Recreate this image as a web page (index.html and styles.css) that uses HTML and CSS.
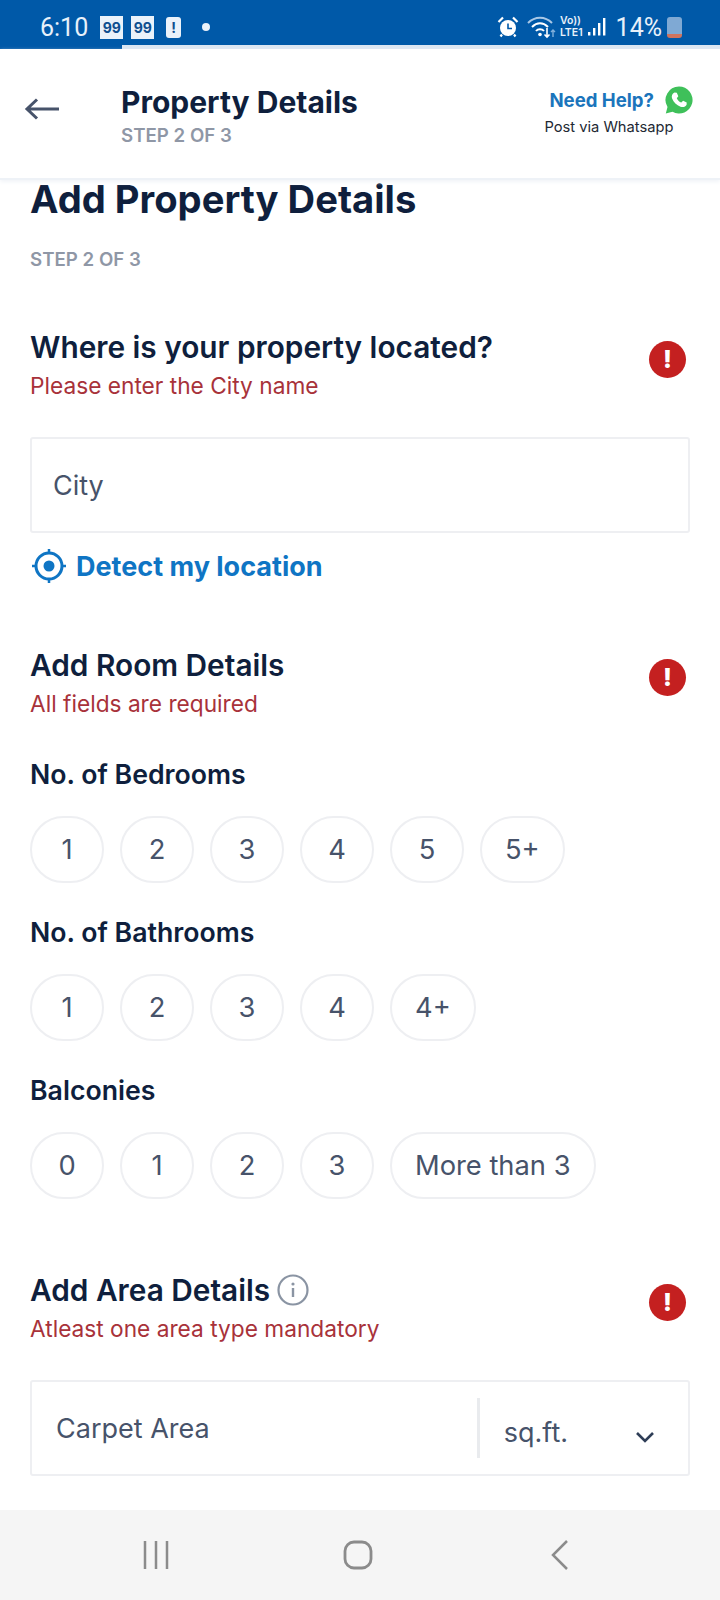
FILE: index.html
```html
<!DOCTYPE html>
<html lang="en">
<head>
  <meta charset="UTF-8">
  <meta name="viewport" content="width=device-width, initial-scale=1.0">
  <title>Property Details</title>
  <link rel="stylesheet" href="styles.css">
</head>
<body>
  <!-- Status Bar -->
  <div class="status-bar">
    <div class="status-left">
      <span class="clock">6:10</span>
      <span class="badge">99</span>
      <span class="badge">99</span>
      <span class="notice">!</span>
      <span class="dot"></span>
    </div>
    <div class="status-right">
      <svg class="alarm" width="22" height="22" viewBox="0 0 22 22">
        <circle cx="11" cy="12" r="8" fill="#fff"/>
        <path d="M11 7.5V12.5H15" fill="none" stroke="#0059a8" stroke-width="1.6"/>
        <path d="M1.500 6L6 1.500M16 1.500L20.500 6M5 18.500L3.500 20.500M17 18.500L18.500 20.500" stroke="#fff" stroke-width="2.200"/>
      </svg>
      <svg class="wifi" width="30" height="24" viewBox="0 0 30 24">
        <path d="M1 8C8 1 18 1 25 8" fill="none" stroke="#a9c8e6" stroke-width="2"/>
        <path d="M5 12C10 7 16 7 21 12" fill="none" stroke="#fff" stroke-width="2"/>
        <path d="M9 16C11 13.500 15 13.500 17 16" fill="none" stroke="#fff" stroke-width="2"/>
        <circle cx="13" cy="19.500" r="1.800" fill="#fff"/>
        <path d="M20 13V22M17.500 19.500L20 22L22.500 19.500" fill="none" stroke="#fff" stroke-width="1.600"/>
        <path d="M26 22V15M24 17L26 15L28 17" fill="none" stroke="#7fb0dc" stroke-width="1.400"/>
      </svg>
      <span class="volte"><span>Vo))</span><span>LTE1</span></span>
      <svg class="signal" width="20" height="20" viewBox="0 0 20 20">
        <rect x="1" y="15" width="2.400" height="3.500" fill="#fff"/>
        <rect x="6" y="11" width="2.400" height="7.500" fill="#fff"/>
        <rect x="11" y="6" width="2.400" height="12.500" fill="#fff"/>
        <rect x="16" y="1" width="2.400" height="17.500" fill="#fff"/>
      </svg>
      <span class="percent">14%</span>
      <span class="battery"></span>
    </div>
  </div>
  <div class="progress"><div class="progress-fill"></div></div>

  <!-- Header -->
  <header class="header">
    <svg class="back" width="36" height="24" viewBox="0 0 36 24">
      <path d="M35 12H3M13 2.500L3 12L13 21.500" fill="none" stroke="#47536a" stroke-width="3"/>
    </svg>
    <div class="header-title">
      <h2>Property Details</h2>
      <p>STEP 2 OF 3</p>
    </div>
    <div class="help">
      <div class="help-top">
        <span class="help-text">Need Help?</span>
        <svg width="28" height="28" viewBox="0 0 28 28">
          <path d="M14 0.500A13.500 13.500 0 1 1 7.500 25.800L0.800 27.500L2.500 21A13.500 13.500 0 0 1 14 0.500Z" fill="#3fc05a"/>
          <path d="M9.500 6.500L11.800 6.700L13.300 10.300L11.800 12.200C12.800 14.300 14.300 15.700 16.300 16.600L18.100 14.700L21.700 16.400L21.600 18.700C20.500 21 18 21.600 15.500 20.700C11.500 19.200 8.700 16.300 7.100 12.500C6.200 10 7.200 7.600 9.500 6.500Z" fill="#fff"/>
        </svg>
      </div>
      <div class="help-sub">Post via Whatsapp</div>
    </div>
  </header>

  <!-- Main Content -->
  <main class="content">
    <h1>Add Property Details</h1>
    <p class="step">STEP 2 OF 3</p>

    <section class="location">
      <div class="section-head">
        <div>
          <h3>Where is your property located?</h3>
          <p class="error">Please enter the City name</p>
        </div>
        <span class="alert">!</span>
      </div>
      <div class="field">City</div>
      <div class="detect">
        <svg width="36" height="36" viewBox="0 0 36 36">
          <circle cx="18" cy="18" r="13" fill="none" stroke="#0f75c4" stroke-width="3"/>
          <circle cx="18" cy="18" r="5.500" fill="#0f75c4"/>
          <path d="M18 1V6M18 30V35M1 18H6M30 18H35" stroke="#0f75c4" stroke-width="2.500"/>
        </svg>
        <span>Detect my location</span>
      </div>
    </section>

    <section class="rooms">
      <div class="section-head">
        <div>
          <h3>Add Room Details</h3>
          <p class="error">All fields are required</p>
        </div>
        <span class="alert">!</span>
      </div>
      <h4>No. of Bedrooms</h4>
      <div class="pills">
        <span class="pill">1</span>
        <span class="pill">2</span>
        <span class="pill">3</span>
        <span class="pill">4</span>
        <span class="pill">5</span>
        <span class="pill wide">5+</span>
      </div>
      <h4>No. of Bathrooms</h4>
      <div class="pills">
        <span class="pill">1</span>
        <span class="pill">2</span>
        <span class="pill">3</span>
        <span class="pill">4</span>
        <span class="pill wide">4+</span>
      </div>
      <h4>Balconies</h4>
      <div class="pills">
        <span class="pill">0</span>
        <span class="pill">1</span>
        <span class="pill">2</span>
        <span class="pill">3</span>
        <span class="pill wide">More than 3</span>
      </div>
    </section>

    <section class="area">
      <div class="section-head">
        <div>
          <h3 class="with-info">Add Area Details
            <svg width="32" height="32" viewBox="0 0 32 32">
              <circle cx="16" cy="16" r="14.500" fill="none" stroke="#8a94a3" stroke-width="2.200"/>
              <rect x="14.800" y="14" width="2.400" height="9" fill="#8a94a3"/>
              <circle cx="16" cy="10" r="1.600" fill="#8a94a3"/>
            </svg>
          </h3>
          <p class="error">Atleast one area type mandatory</p>
        </div>
        <span class="alert">!</span>
      </div>
      <div class="field area-field">
        <span class="area-label">Carpet Area</span>
        <span class="divider"></span>
        <span class="unit">sq.ft.</span>
        <svg width="20" height="12" viewBox="0 0 20 12">
          <path d="M2 2L10 10L18 2" fill="none" stroke="#2f3e57" stroke-width="2.600"/>
        </svg>
      </div>
    </section>
  </main>

  <!-- Navigation Bar -->
  <nav class="nav-bar">
    <svg width="30" height="30" viewBox="0 0 30 30">
      <path d="M4 1V29M15 1V29M26 1V29" stroke="#8b8b8b" stroke-width="2.500"/>
    </svg>
    <svg width="30" height="30" viewBox="0 0 30 30">
      <rect x="2" y="2" width="26" height="26" rx="9" fill="none" stroke="#8b8b8b" stroke-width="2.800"/>
    </svg>
    <svg class="nav-back" width="20" height="32" viewBox="0 0 20 32">
      <path d="M17 2L3 16L17 30" fill="none" stroke="#8b8b8b" stroke-width="2.500"/>
    </svg>
  </nav>
</body>
</html>
```

FILE: styles.css
```css
/* General Styles */
* {
  box-sizing: border-box;
}

body {
  margin: 0;
  width: 720px;
  height: 1600px;
  overflow: hidden;
  display: flex;
  flex-direction: column;
  background-color: #ffffff;
  font-family: Inter, "Liberation Sans", sans-serif;
  color: #0f1f3d;
}

h1, h2, h3, h4, p {
  margin: 0;
}

/* Status Bar */
.status-bar {
  height: 45px;
  flex: none;
  display: flex;
  justify-content: space-between;
  align-items: center;
  padding: 9px 38px 0 40px;
  background-color: #0059a8;
  color: #e8f1fa;
}

.status-left,
.status-right {
  display: flex;
  align-items: center;
}

.clock {
  font-family: Roboto, sans-serif;
  font-size: 25px;
  margin-right: 12px;
}

.badge {
  width: 23px;
  height: 23px;
  margin-right: 8px;
  background-color: #eaf2fa;
  color: #0f4f8f;
  font-size: 14px;
  font-weight: 700;
  line-height: 23px;
  text-align: center;
}

.notice {
  width: 15px;
  height: 21px;
  margin-left: 4px;
  border-radius: 3px;
  background-color: #eaf2fa;
  color: #0f4f8f;
  font-size: 14px;
  font-weight: 700;
  line-height: 21px;
  text-align: center;
}

.dot {
  width: 8px;
  height: 8px;
  margin-left: 21px;
  border-radius: 50%;
  background-color: #eaf2fa;
}

.alarm {
  margin-right: 8px;
}

.wifi {
  margin-right: 3px;
}

.volte {
  display: flex;
  flex-direction: column;
  margin-right: 4px;
  font-size: 10.500px;
  font-weight: 600;
  line-height: 12.500px;
}

.percent {
  margin: 0 5px 0 9px;
  font-family: Roboto, sans-serif;
  font-size: 25px;
}

.battery {
  width: 15px;
  height: 21px;
  border-radius: 3px;
  background: linear-gradient(#7fa9d4 82%, #d0745f 82%);
}

.progress {
  height: 4px;
  flex: none;
  background-color: #dbe6f2;
}

.progress-fill {
  width: 122px;
  height: 100%;
  background-color: #0059a8;
}

/* Header */
.header {
  height: 131px;
  flex: none;
  display: flex;
  align-items: center;
  position: relative;
  border-bottom: 2px solid #eef2f7;
  box-shadow: 0 2px 4px #f1f4f8;
}

.back {
  margin-left: 24px;
  margin-bottom: 9px;
}

.header-title {
  margin-left: 61px;
  margin-top: 4px;
}

.header-title h2 {
  font-size: 30px;
  font-weight: 700;
  line-height: 36px;
}

.header-title p {
  margin-top: 4px;
  font-size: 18.700px;
  font-weight: 600;
  line-height: 24px;
  color: #8f97a6;
}

.help {
  margin-left: auto;
  margin-right: 27px;
  margin-bottom: 4px;
}

.help-top {
  display: flex;
  align-items: center;
  gap: 11px;
  margin-left: 5px;
}

.help-text {
  font-size: 18.600px;
  font-weight: 700;
  color: #1b75bc;
}

.help-sub {
  margin-top: 3px;
  font-size: 14.700px;
  line-height: 20px;
  color: #222833;
}

/* Main Content */
.content {
  flex: 1;
  min-height: 0;
  padding: 0 30px;
}

h1 {
  font-size: 38.200px;
  font-weight: 700;
  line-height: 38px;
}

.step {
  margin-top: 30px;
  font-size: 18.700px;
  font-weight: 600;
  line-height: 24px;
  color: #8f97a6;
}

.section-head {
  display: flex;
  justify-content: space-between;
  align-items: flex-start;
}

h3 {
  font-size: 29.800px;
  font-weight: 600;
  line-height: 36px;
}

.error {
  margin-top: 5px;
  font-size: 22.700px;
  line-height: 32px;
  color: #a8323a;
}

.alert {
  width: 37px;
  height: 37px;
  margin-top: 12px;
  margin-right: 4px;
  border-radius: 50%;
  background-color: #c42020;
  color: #ffffff;
  font-size: 25px;
  font-weight: 800;
  line-height: 37px;
  text-align: center;
}

.location {
  margin-top: 57px;
}

.field {
  height: 96px;
  margin-top: 35px;
  display: flex;
  align-items: center;
  padding-left: 21px;
  border: 2px solid #eeeff2;
  border-radius: 3px;
  font-size: 27px;
  color: #47536a;
}

.detect {
  display: flex;
  align-items: center;
  gap: 9px;
  margin-top: 15px;
  font-size: 27px;
  font-weight: 700;
  color: #0f75c4;
}

.detect svg {
  margin-left: 1px;
}

.rooms {
  margin-top: 63px;
}

h4 {
  margin-top: 37px;
  font-size: 26.700px;
  font-weight: 600;
  line-height: 34px;
}

.pills {
  display: flex;
  gap: 16px;
  margin-top: 25px;
}

.pills + h4 {
  margin-top: 32px;
}

.pill {
  width: 74px;
  height: 67px;
  display: flex;
  align-items: center;
  justify-content: center;
  border: 2px solid #eeeff2;
  border-radius: 34px;
  font-size: 27.300px;
  color: #47536a;
}

.pill.wide {
  width: auto;
  padding: 0 23px;
}

.area {
  margin-top: 73px;
}

.with-info {
  display: flex;
  align-items: center;
  gap: 7px;
}

.area-field {
  margin-top: 35px;
  padding-left: 24px;
}

.area-label {
  flex: 1;
}

.divider {
  width: 3px;
  height: 60px;
  background-color: #e9ebee;
}

.unit {
  margin: 8px 0 0 24px;
}

.area-field svg {
  margin: 18px 33px 0 67px;
}

/* Navigation Bar */
.nav-bar {
  height: 90px;
  flex: none;
  display: flex;
  align-items: center;
  gap: 172px;
  padding-left: 141px;
  background-color: #f5f5f5;
}

.nav-back {
  margin-left: 5px;
}
```
